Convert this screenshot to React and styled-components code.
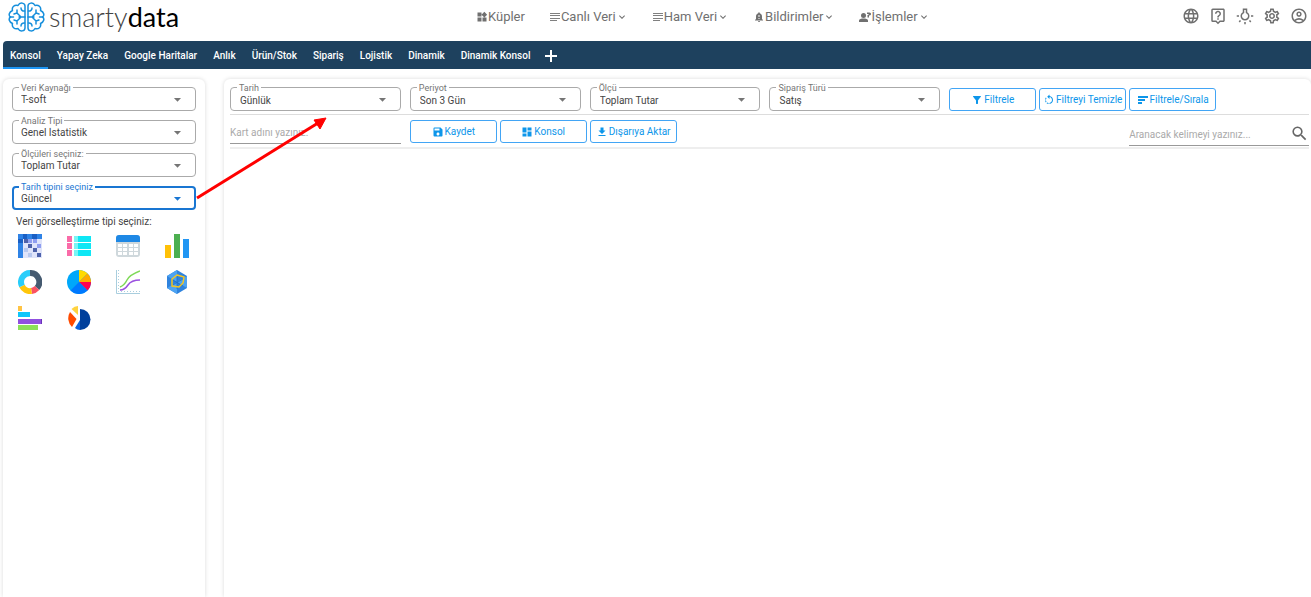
import React from "react";
import styled, { createGlobalStyle, css } from "styled-components";
import {
  MdWidgets, MdKeyboardArrowDown, MdLanguage, MdNotificationImportant,
  MdOutlineLiveHelp, MdOutlineWbIncandescent, MdOutlineSettings, MdOutlineAccountCircle,
  MdArrowDropDown, MdFilterAlt, MdRotateLeft, MdSave, MdDashboard,
  MdFileDownload, MdSearch,
} from "react-icons/md";

const GlobalStyle = createGlobalStyle`
  *, *::before, *::after { box-sizing: border-box; }
  body { margin: 0; background: #fff; color: #444; font: 10px/12px Roboto, sans-serif; }
  button, input, select { font: inherit; margin: 0; }
  svg { display: block; flex: none; }
`;

const Page = styled.div`
  position: relative;
  display: flex;
  flex-direction: column;
  min-height: 100vh;
`;

const Header = styled.header`
  display: grid;
  grid-template-columns: 36% auto 1fr;
  align-items: start;
  height: 41px;
`;

const Brand = styled.a`
  display: flex;
  align-items: flex-start;
  gap: 4px;
  padding: 0 0 0 8px;
  color: #444;
  text-decoration: none;
  svg { margin-top: 1px; }
`;

const Wordmark = styled.span`
  font: 300 27px/33px Lato, sans-serif;
  b { font-weight: 400; color: #000; }
`;

const MainNav = styled.nav`
  display: flex;
  gap: 24px;
  padding: 9px 0 0 4px;
`;

const NavButton = styled.button`
  display: flex;
  align-items: center;
  padding: 0;
  border: 0;
  background: none;
  color: #707070;
  font-size: 13px;
  line-height: 16px;
  white-space: nowrap;
`;

const Tools = styled.div`
  display: flex;
  justify-content: flex-end;
  gap: 9px;
  padding: 7px 3px 0 0;
`;

const IconButton = styled.button`
  display: flex;
  padding: 0;
  border: 0;
  background: none;
  color: #707070;
`;

const TabBar = styled.nav`
  display: flex;
  gap: 2px;
  height: 28px;
  margin-left: 3px;
  border-radius: 4px 0 0 0;
  background: #1e415e;
  color: #fff;
`;

const Tab = styled.a`
  display: flex;
  align-items: center;
  padding: 3px 7px 0;
  border-bottom: 2px solid ${(p) => (p.$active ? "#1e96f5" : "transparent")};
  color: #fff;
  font-size: 10px;
  font-weight: 500;
  text-decoration: none;
  white-space: nowrap;
`;

const AddTab = styled(IconButton)`
  align-items: center;
  padding: 0 4px;
  color: #fff;
`;

const Workspace = styled.div`
  flex: 1;
  display: flex;
  gap: 19px;
  padding: 10px 0 0 3px;
`;

const Panel = styled.section`
  border-radius: 6px 6px 0 0;
  background: #fff;
  box-shadow: 0 0 4px rgba(0, 0, 0, 0.15);
`;

const Sidebar = styled(Panel).attrs({ as: "aside" })`
  flex: none;
  width: 202px;
  padding: 8px 9px;
`;

const Content = styled(Panel).attrs({ as: "main" })`
  flex: 1;
  min-width: 0;
  padding: 8px 2px 8px 6px;
`;

const FieldStack = styled.div`
  display: flex;
  flex-direction: column;
  gap: 9px;
`;

const FieldBox = styled.div`
  position: relative;
  flex: 1;
  min-width: 0;
  color: ${(p) => (p.$focused ? "#1976d2" : "#757575")};
  label {
    position: absolute;
    top: -5px;
    left: 7px;
    padding: 0 2px;
    background: #fff;
    font-size: 9px;
    line-height: 12px;
  }
  select {
    display: flex;
    align-items: center;
    width: 100%;
    height: 24px;
    min-height: 0;
    padding: ${(p) => (p.$low ? "4px 24px 0 9px" : "2px 24px 0 8px")};
    border: 1px solid #aaa;
    border-radius: 4px;
    outline: 0;
    appearance: none;
    appearance: base-select;
    background: #fff;
    color: #444;
    line-height: 16px;
    ${(p) => p.$focused && css`border: 2px solid #1976d2; padding-left: 7px;`}
  }
  select::picker-icon { display: none; }
  svg {
    position: absolute;
    top: 4px;
    right: 10px;
    pointer-events: none;
  }
`;

const Caption = styled.h2`
  margin: 6px 0 6px 4px;
  font-size: 10px;
  font-weight: 400;
  line-height: 12px;
`;

const ChartGrid = styled.div`
  display: grid;
  grid-template-columns: repeat(4, 49px);
  grid-auto-rows: 36px;
  margin-left: 6px;
`;

const ToolRow = styled.div`
  display: grid;
  grid-template-columns: repeat(12, minmax(0, 1fr));
  height: ${(p) => (p.$tall ? "34px" : "28px")};
  border-bottom: ${(p) => (p.$tall ? "2px solid #eee" : "1px solid #ddd")};
`;

const Cell = styled.div`
  grid-column: ${(p) => p.$column || "span 2"};
  display: flex;
  align-items: flex-start;
  padding: ${(p) => p.$pad || "0 9px 0 0"};
`;

const ActionButton = styled.button`
  flex: 1;
  display: flex;
  align-items: center;
  justify-content: center;
  gap: 1px;
  height: 23px;
  padding: 0;
  border: 1px solid #42a5f5;
  border-radius: 3px;
  background: #fff;
  color: #0d96ea;
  white-space: nowrap;
`;

const TextField = styled.div`
  flex: 1;
  display: flex;
  align-items: center;
  min-width: 0;
  height: 24px;
  border-bottom: 1px solid #999;
  color: #666;
  input {
    flex: 1;
    min-width: 0;
    padding: 2px 0 0;
    border: 0;
    outline: 0;
    background: none;
  }
  input::placeholder { color: #aaa; opacity: 1; }
`;

const Pointer = styled.svg`
  position: absolute;
  top: 110px;
  left: 190px;
  pointer-events: none;
`;

const BrainHalf = () => (
  <>
    <path d="M17 5c0-3-5-4.500-7-.5C6.500 3.500 3.500 6 4.500 9.500 1 11 .2 14.500 2.500 16 .2 17.500 1 21 4.500 22.500c-1 3.500 2 6 5.500 5 2 4 7 2.500 7-.5Z" />
    <path d="M17 16h-6M13 16l-4-4-3 1M9 12V9M13 16l-4 4-3-1M9 20v3M16.500 10c-2 .3-3.500-1-3.500-3M16.500 22c-2-.3-3.500 1-3.500 3M2.500 16h3" />
  </>
);

const Brain = () => (
  <svg width="37" height="32" viewBox="0 0 37 32" fill="none" stroke="#168fdc" strokeWidth="1.500" strokeLinejoin="round" strokeLinecap="round" aria-hidden="true">
    <BrainHalf />
    <g transform="translate(37 0) scale(-1 1)"><BrainHalf /></g>
  </svg>
);

const Lines = () => (
  <svg width="12" height="12" viewBox="0 0 12 12" fill="#808080" aria-hidden="true">
    <path d="M1 2h10v1H1zM1 4h10v1H1zM1 7h10v1H1zM1 9h7v1H1z" />
  </svg>
);

const SortLines = () => (
  <svg width="12" height="12" viewBox="0 0 12 12" fill="currentColor" aria-hidden="true">
    <path d="M1 2h10v2H1zM1 5h7v2H1zM1 8h4v2H1z" />
  </svg>
);

const Plus = () => (
  <svg width="17" height="17" viewBox="0 0 17 17" fill="currentColor" aria-hidden="true">
    <path d="M7 3h2v5h5v2H9v5H7v-5H2V8h5z" />
  </svg>
);

const PersonTalk = () => (
  <svg width="12" height="12" viewBox="0 0 24 24" fill="currentColor" aria-hidden="true">
    <circle cx="9" cy="9" r="5" />
    <path d="M0 22v-3c0-3 5-4 9-4s9 1 9 4v3ZM16 3h5c4 0 4 6 0 6h-1v4h-3V8h2V6h-3Z" />
  </svg>
);

const chartIcons = [
  ["Isı haritası", <>
    <path fill="#dfe4fa" d="M0 0h24v24H0z" />
    <path fill="#2f83e6" d="M0 0h24v5H5v19H0z" /><path fill="#1a5fc4" d="M5 0h4v5H5zM14 0h5v5h-5zM0 5h5v4H0z" />
    <path fill="#4d62ab" d="M6 5h4v4H6zM10 10h4v4h-4zM15 14h4v4h-4zM19 19h4v4h-4z" />
    <path fill="#8f9ef0" d="M15 5h4v4h-4zM19 10h4v4h-4zM10 5h4v4h-4z" />
    <path fill="#b7c8ef" d="M6 14h4v4H6zM10 19h4v4h-4z" />
  </>],
  ["Liste", <>
    <path fill="#fa6ba8" d="M0 2h5v6H0zM0 9h5v6H0zM0 16h5v6H0z" />
    <path fill="#0ee7f5" d="M7 2h17v6H7zM7 9h17v6H7zM7 16h17v6H7z" />
    <path fill="#79f5f5" d="M7 2h4v6H7zM7 9h4v6H7zM7 16h4v6H7z" />
  </>],
  ["Tablo", <>
    <rect y="1" width="24" height="22" rx="3" fill="#cfd8dc" /><path fill="#1e88e5" d="M0 8V4q0-3 3-3h18q3 0 3 3v4z" />
    <path fill="#fff" d="M2 10h4v3H2zM7 10h4v3H7zM13 10h4v3h-4zM18 10h4v3h-4zM2 14h4v3H2zM7 14h4v3H7zM13 14h4v3h-4zM18 14h4v3h-4zM2 18h4v3H2zM7 18h4v3H7zM13 18h4v3h-4zM18 18h4v3h-4z" />
  </>],
  ["Sütun grafik", <>
    <path fill="#ffc107" d="M0 11h6v13H0z" /><path fill="#4caf50" d="M9 0h6v24H9z" /><path fill="#2196f3" d="M18 5h6v19h-6z" />
  </>],
  ["Halka grafik", <g fill="none" strokeWidth="6">
    <path stroke="#455a70" d="M12 3a9 9 0 0 1 7 15" /><path stroke="#fa5262" d="M19 18a9 9 0 0 1-5.500 3" />
    <path stroke="#ffc60a" d="M13.500 21a9 9 0 0 1-9.500-5" /><path stroke="#28cdfa" d="M4 16a9 9 0 0 1 8-13" />
  </g>],
  ["Pasta grafik", <>
    <circle cx="12" cy="12" r="12" fill="#00a8fa" /><path fill="#ffda00" d="M12 12V0a12 12 0 0 1 8.500 3.500z" />
    <path fill="#ffaa00" d="M12 12l8.500-8.500A12 12 0 0 1 24 12z" /><path fill="#ff0050" d="M12 12h12a12 12 0 0 1-3.500 8.500z" />
    <path fill="#0079ff" d="M12 12l8.500 8.500a12 12 0 0 1-17 0z" />
  </>],
  ["Çizgi grafik", <g fill="none">
    <path stroke="#a9cede" d="M.5 0v23.500H24" /><path stroke="#a9cede" strokeDasharray="1 2" d="M2.500 0v21.500H24" />
    <path stroke="#7ed957" strokeWidth="1.500" d="M4 17c3-1 5-3 7-7s5-6 13-9" /><path stroke="#9b51e0" strokeWidth="1.500" d="M4 20c4 0 6-2 8-5s5-5 12-5" />
  </g>],
  ["Radar grafik", <>
    <path fill="#2f83de" d="M12 0l10 6v12l-10 6-10-6V6z" /><path fill="#4da3f2" d="M12 0v12L2 6zM12 12l10-6v12zM12 12v12L2 18z" />
    <path fill="none" stroke="#1d6fc4" strokeWidth=".7" d="M12 5v14M6 9l12 7M18 9L6 16" /><path fill="none" stroke="#f4c622" strokeWidth="1.500" d="M12 5l7 2-1 6-4 4-7-1 0-7z" />
  </>],
  ["Yatay çubuk grafik", <>
    <path fill="#ffc344" d="M0 0h4v5H0z" /><path fill="#0ec6fa" d="M0 6h12v5H0z" /><path fill="#9050e0" d="M0 13h24v5H0z" /><path fill="#8ce05a" d="M0 19h20v5H0z" />
    <path fill="#6a35b8" d="M23 13h1v5h-1z" />
  </>],
  ["Dilimli pasta", <>
    <path fill="#ff4b00" d="M9.500 13L3 6A12 12 0 0 0 5 21z" /><path fill="#ffd33f" d="M11 9L4.500 3q3-3 6.500-3z" />
    <path fill="#003f9c" d="M13 3a10.500 10.500 0 1 1 0 21z" /><path fill="#0a63df" d="M13 14v10q-3 0-5-2z" />
  </>],
];

const sideFields = [
  ["Veri Kaynağı", "T-soft"], ["Analiz Tipi", "Genel İstatistik"],
  ["Ölçüleri seçiniz:", "Toplam Tutar"], ["Tarih tipini seçiniz", "Güncel", true],
];
const topFields = [["Tarih", "Günlük"], ["Periyot", "Son 3 Gün"], ["Ölçü", "Toplam Tutar"], ["Sipariş Türü", "Satış"]];
const tabs = ["Konsol", "Yapay Zeka", "Google Haritalar", "Anlık", "Ürün/Stok", "Sipariş", "Lojistik", "Dinamik", "Dinamik Konsol"];
const filterActions = [[MdFilterAlt, "Filtrele"], [MdRotateLeft, "Filtreyi Temizle"], [SortLines, "Filtrele/Sırala"]];
const cardActions = [[MdSave, "Kaydet"], [MdDashboard, "Konsol"], [MdFileDownload, "Dışarıya Aktar"]];
const navItems = [
  [MdWidgets, "Küpler", false], [Lines, "Canlı Veri", true], [Lines, "Ham Veri", true],
  [MdNotificationImportant, "Bildirimler", true], [PersonTalk, "İşlemler", true],
];
const tools = [
  [MdLanguage, "Dil"], [MdOutlineLiveHelp, "Yardım"], [MdOutlineWbIncandescent, "Tema"],
  [MdOutlineSettings, "Ayarlar"], [MdOutlineAccountCircle, "Hesap"],
];

function SelectField({ label, value, focused, low }) {
  const id = React.useId();
  return (
    <FieldBox $focused={focused} $low={low}>
      <select id={id}><option>{value}</option></select>
      <label htmlFor={id}>{label}</label>
      <MdArrowDropDown size={17} />
    </FieldBox>
  );
}

function Actions({ items, pad }) {
  return items.map(([Icon, text]) => (
    <Cell key={text} $column="span 1" $pad={pad}>
      <ActionButton type="button"><Icon size={12} />{text}</ActionButton>
    </Cell>
  ));
}

export default function App() {
  return (
    <Page>
      <GlobalStyle />
      <Header>
        <Brand href="#"><Brain /><Wordmark>smarty<b>data</b></Wordmark></Brand>
        <MainNav>
          {navItems.map(([Icon, text, menu]) => (
            <NavButton type="button" key={text}>
              <Icon size={12} />{text}{menu && <MdKeyboardArrowDown size={12} />}
            </NavButton>
          ))}
        </MainNav>
        <Tools>
          {tools.map(([Icon, text]) => <IconButton type="button" key={text} aria-label={text}><Icon size={18} /></IconButton>)}
        </Tools>
      </Header>
      <TabBar>
        {tabs.map((t, i) => <Tab href="#" key={t} $active={i === 0}>{t}</Tab>)}
        <AddTab type="button" aria-label="Ekle"><Plus /></AddTab>
      </TabBar>
      <Workspace>
        <Sidebar>
          <FieldStack>
            {sideFields.map(([l, v, f]) => <SelectField key={l} label={l} value={v} focused={f} />)}
          </FieldStack>
          <Caption>Veri görselleştirme tipi seçiniz:</Caption>
          <ChartGrid>
            {chartIcons.map(([name, art]) => (
              <IconButton type="button" key={name} aria-label={name}>
                <svg width="24" height="24" viewBox="0 0 24 24">{art}</svg>
              </IconButton>
            ))}
          </ChartGrid>
        </Sidebar>
        <Content>
          <ToolRow>
            {topFields.map(([l, v]) => <Cell key={l}><SelectField label={l} value={v} low /></Cell>)}
            <Actions items={filterActions} pad="1px 3px 0 0" />
          </ToolRow>
          <ToolRow $tall>
            <Cell $pad="5px 9px 0 0">
              <TextField><input aria-label="Kart adı" placeholder="Kart adını yazınız." /></TextField>
            </Cell>
            <Actions items={cardActions} pad="5px 3px 0 0" />
            <Cell $column="11 / span 2" $pad="7px 0 0">
              <TextField><input aria-label="Ara" placeholder="Aranacak kelimeyi yazınız..." /><MdSearch size={19} /></TextField>
            </Cell>
          </ToolRow>
        </Content>
      </Workspace>
      <Pointer width="140" height="95" aria-hidden="true">
        <path d="M7 88L128 13" stroke="#f00" strokeWidth="3" />
        <path d="M136 8l-6 11-6-9z" fill="#f00" stroke="#f00" />
      </Pointer>
    </Page>
  );
}
